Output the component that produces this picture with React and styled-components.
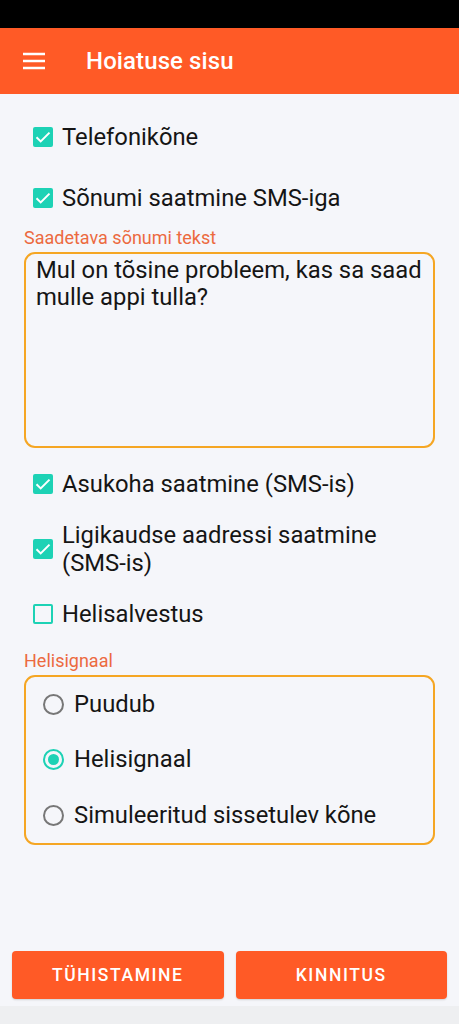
import React, { useState } from "react";
import styled, { createGlobalStyle } from "styled-components";

const GlobalStyle = createGlobalStyle`
  html, body {
    margin: 0;
    padding: 0;
    background: #f5f6fa;
  }
  body {
    font-family: Roboto, "Noto Sans", "Liberation Sans", sans-serif;
    -webkit-font-smoothing: antialiased;
  }
  * { box-sizing: border-box; }
`;

const Screen = styled.div`
  width: 459px;
  height: 1024px;
  display: flex;
  flex-direction: column;
  background: #f5f6fa;
  overflow: hidden;
`;

const StatusBar = styled.div`
  height: 28px;
  background: #000;
  flex-shrink: 0;
`;

const AppBar = styled.header`
  height: 66px;
  background: #ff5a26;
  display: flex;
  align-items: center;
  padding-left: 20px;
  flex-shrink: 0;
`;

const MenuButton = styled.button`
  border: 0;
  background: none;
  padding: 0;
  width: 28px;
  height: 28px;
  display: flex;
  align-items: center;
  justify-content: center;
  color: #fff;
`;

const Title = styled.h1`
  margin: 0 0 0 38px;
  font-size: 24px;
  font-weight: 500;
  color: #fff;
  letter-spacing: 0.1px;
`;

const Content = styled.main`
  flex: 1;
  display: flex;
  flex-direction: column;
  padding: 19px 24px 0 24px;
`;

const CheckRow = styled.label`
  display: flex;
  align-items: center;
  min-height: 48px;
  margin-top: ${(p) => (p.$first ? 0 : 13)}px;
  padding-left: 9px;
  cursor: pointer;
`;

const Box = styled.span`
  width: 20px;
  height: 20px;
  flex-shrink: 0;
  border-radius: 2px;
  display: flex;
  align-items: center;
  justify-content: center;
  background: ${(p) => (p.$on ? "#1dd2b5" : "transparent")};
  border: ${(p) => (p.$on ? "none" : "2.5px solid #1dd2b5")};
`;

const ItemText = styled.span`
  margin-left: 9px;
  font-size: 23.8px;
  line-height: 28px;
  color: #151515;
`;

const FieldLabel = styled.div`
  font-size: 18px;
  line-height: 20px;
  color: #ec6a3f;
  margin-top: ${(p) => p.$top}px;
  margin-bottom: 4px;
`;

const MessageBox = styled.textarea`
  width: 100%;
  height: 196px;
  border: 2px solid #f5a623;
  border-radius: 11px;
  background: transparent;
  padding: 3px 10px;
  font-family: inherit;
  font-size: 23.8px;
  line-height: 27px;
  color: #151515;
  resize: none;
  outline: none;
  margin-bottom: 12px;
`;

const RadioGroup = styled.div`
  border: 2px solid #f5a623;
  border-radius: 11px;
  display: flex;
  flex-direction: column;
  padding-left: 17px;
`;

const RadioRow = styled.label`
  height: 56px;
  display: flex;
  align-items: center;
  cursor: pointer;
  &:first-child {
    height: 54px;
  }
`;

const Circle = styled.span`
  width: 21px;
  height: 21px;
  border-radius: 50%;
  border: 2px solid ${(p) => (p.$on ? "#1dd2b5" : "#777")};
  display: flex;
  align-items: center;
  justify-content: center;
  flex-shrink: 0;
  &::after {
    content: "";
    width: 11px;
    height: 11px;
    border-radius: 50%;
    background: #1dd2b5;
    display: ${(p) => (p.$on ? "block" : "none")};
  }
`;

const RadioText = styled(ItemText)`
  margin-left: 10px;
`;

const Footer = styled.footer`
  display: flex;
  gap: 12px;
  padding: 0 12px 7px 12px;
  flex-shrink: 0;
`;

const ActionButton = styled.button`
  flex: 1;
  height: 48px;
  border: 0;
  border-radius: 4px;
  background: #ff5a26;
  color: #fff;
  font-family: inherit;
  font-size: 17.5px;
  font-weight: 500;
  letter-spacing: 1.6px;
  text-transform: uppercase;
  box-shadow: 0 1px 2px rgba(0, 0, 0, 0.15);
`;

const NavStrip = styled.div`
  height: 18px;
  background: #eeeff1;
  flex-shrink: 0;
`;

const Check = () => (
  <svg width="20" height="20" viewBox="0 0 20 20">
    <path d="M3.5 10.2l4.2 4.2L16.5 5.6" fill="none" stroke="#fff" strokeWidth="2" />
  </svg>
);

const Menu = () => (
  <svg width="24" height="24" viewBox="0 0 24 24">
    <path d="M1 5h22M1 12h22M1 19h22" stroke="#fff" strokeWidth="2.4" />
  </svg>
);

const CheckItem = ({ on, first, children, onToggle }) => (
  <CheckRow $first={first} onClick={onToggle}>
    <Box $on={on}>{on && <Check />}</Box>
    <ItemText>{children}</ItemText>
  </CheckRow>
);

export default function App() {
  const [checks, setChecks] = useState({
    call: true,
    sms: true,
    location: true,
    address: true,
    audio: false,
  });
  const [signal, setSignal] = useState("signal");
  const toggle = (k) => setChecks((c) => ({ ...c, [k]: !c[k] }));

  const radios = [
    { id: "none", label: "Puudub" },
    { id: "signal", label: "Helisignaal" },
    { id: "call", label: "Simuleeritud sissetulev kõne" },
  ];

  return (
    <Screen>
      <GlobalStyle />
      <StatusBar />
      <AppBar>
        <MenuButton>
          <Menu />
        </MenuButton>
        <Title>Hoiatuse sisu</Title>
      </AppBar>
      <Content>
        <CheckItem first on={checks.call} onToggle={() => toggle("call")}>
          Telefonikõne
        </CheckItem>
        <CheckItem on={checks.sms} onToggle={() => toggle("sms")}>
          Sõnumi saatmine SMS-iga
        </CheckItem>
        <FieldLabel $top={6}>Saadetava sõnumi tekst</FieldLabel>
        <MessageBox defaultValue="Mul on tõsine probleem, kas sa saad mulle appi tulla?" />
        <CheckItem first on={checks.location} onToggle={() => toggle("location")}>
          Asukoha saatmine (SMS-is)
        </CheckItem>
        <CheckItem on={checks.address} onToggle={() => toggle("address")}>
          Ligikaudse aadressi saatmine (SMS-is)
        </CheckItem>
        <CheckItem on={checks.audio} onToggle={() => toggle("audio")}>
          Helisalvestus
        </CheckItem>
        <FieldLabel $top={13}>Helisignaal</FieldLabel>
        <RadioGroup>
          {radios.map((r) => (
            <RadioRow key={r.id} onClick={() => setSignal(r.id)}>
              <Circle $on={signal === r.id} />
              <RadioText>{r.label}</RadioText>
            </RadioRow>
          ))}
        </RadioGroup>
      </Content>
      <Footer>
        <ActionButton>Tühistamine</ActionButton>
        <ActionButton>Kinnitus</ActionButton>
      </Footer>
      <NavStrip />
    </Screen>
  );
}
